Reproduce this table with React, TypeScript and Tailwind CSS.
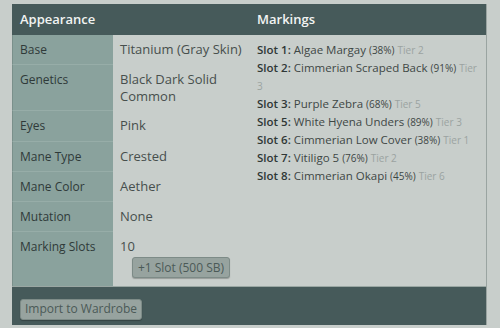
import React from 'react';

const rows: { label: string; value: React.ReactNode; h: string }[] = [
    { label: 'Base', value: 'Titanium (Gray Skin)', h: 'h-[30px]' },
    { label: 'Genetics', value: 'Black Dark Solid Common', h: 'h-[46px]' },
    { label: 'Eyes', value: 'Pink', h: 'h-[31px]' },
    { label: 'Mane Type', value: 'Crested', h: 'h-[30px]' },
    { label: 'Mane Color', value: 'Aether', h: 'h-[30px]' },
    { label: 'Mutation', value: 'None', h: 'h-[30px]' },
];

const markings = [
    { slot: 1, name: 'Algae Margay', pct: 38, tier: 2 },
    { slot: 2, name: 'Cimmerian Scraped Back', pct: 91, tier: 3 },
    { slot: 3, name: 'Purple Zebra', pct: 68, tier: 5 },
    { slot: 5, name: 'White Hyena Unders', pct: 89, tier: 3 },
    { slot: 6, name: 'Cimmerian Low Cover', pct: 38, tier: 1 },
    { slot: 7, name: 'Vitiligo 5', pct: 76, tier: 2 },
    { slot: 8, name: 'Cimmerian Okapi', pct: 45, tier: 6 },
];

const btn =
    'rounded-[3px] border border-[#7d8b87] bg-[#97a39f] text-[#4b5a57] text-[12px] leading-none shadow-[0_1px_1px_rgba(0,0,0,0.25)]';

export default function App() {
    return (
        <div
            className="w-[500px] h-[328px] bg-[#c8cecb] pt-[4px] pl-[12px]"
            style={{ fontFamily: '"Open Sans", sans-serif' }}
        >
            <div className="w-[475px] border-r border-[#9aa4a1]">
                {/* header */}
                <div className="flex h-[31px] bg-[#465a5a] text-[#f2f4f3] text-[13px] font-semibold">
                    <div className="w-[238px] flex items-center pl-[8px]">Appearance</div>
                    <div className="flex-1 flex items-center pl-[7px]">Markings</div>
                </div>

                <div className="flex">
                    {/* appearance */}
                    <div className="w-[238px] leading-[17px]">
                        {rows.map((r) => (
                            <div key={r.label} className={`flex ${r.h}`}>
                                <div className="w-[101px] bg-[#8aa29d] border-l border-[#7a908b] border-b border-b-[#97ada8] pl-[7px] pt-[6px] text-[12px] text-[#2f3a39]">
                                    {r.label}
                                </div>
                                <div className="flex-1 pl-[7px] pr-[6px] pt-[6px] text-[13px] text-[#474f4d]">{r.value}</div>
                            </div>
                        ))}
                        <div className="flex h-[54px]">
                            <div className="w-[101px] bg-[#8aa29d] border-l border-[#7a908b] pl-[7px] pt-[6px] text-[12px] text-[#2f3a39]">
                                Marking Slots
                            </div>
                            <div className="flex-1 pl-[7px] pt-[6px] text-[13px] text-[#474f4d]">
                                <div>10</div>
                                <button className={`${btn} ml-[12px] mt-[2px] h-[21px] w-[98px]`}>+1 Slot (500 SB)</button>
                            </div>
                        </div>
                    </div>

                    {/* markings */}
                    <div className="flex-1 pl-[7px] pr-[7px] pt-[6px] text-[11.5px] leading-[17px] text-[#3e4745]">
                        {markings.map((m) => (
                            <div key={m.slot}>
                                <span className="font-semibold text-[#2f3736]">Slot {m.slot}:</span> {m.name}{' '}
                                <span className="text-[10px]">({m.pct}%)</span>{' '}
                                <span className="text-[10px] text-[#9ba3a1]">Tier {m.tier}</span>
                            </div>
                        ))}
                    </div>
                </div>

                {/* footer */}
                <div className="h-[39px] bg-[#465a5a] border-t border-[#9aa7a3] pl-[8px] pt-[8px]">
                    <button className={`${btn} h-[21px] w-[122px]`}>Import to Wardrobe</button>
                </div>
            </div>
        </div>
    );
}
